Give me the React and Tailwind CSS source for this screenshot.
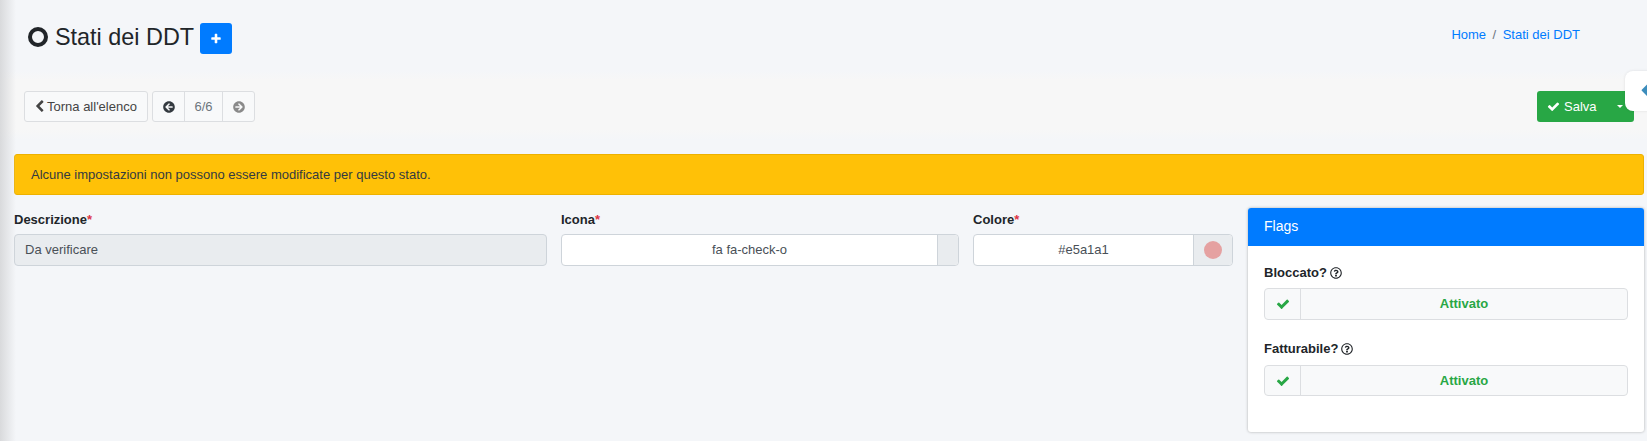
import { FaArrowCircleLeft, FaArrowCircleRight, FaRegQuestionCircle } from 'react-icons/fa';

function CheckIcon({ className }) {
  return (
    <svg viewBox="0 0 1792 1792" fill="currentColor" className={className}>
      <path d="M1671 566q0 40-28 68l-724 724-136 136q-28 28-68 28t-68-28l-136-136-362-362q-28-28-28-68t28-68l136-136q28-28 68-28t68 28l294 295 656-657q28-28 68-28t68 28l136 136q28 28 28 68z" />
    </svg>
  );
}

function ChevronIcon({ className }) {
  return (
    <svg viewBox="0 0 1792 1792" fill="currentColor" className={className}>
      <path d="M1427 301l-531 531 531 531q19 19 19 45t-19 45l-166 166q-19 19-45 19t-45-19l-742-742q-19-19-19-45t19-45l742-742q19-19 45-19t45 19l166 166q19 19 19 45t-19 45z" />
    </svg>
  );
}

function PlusIcon({ className }) {
  return (
    <svg viewBox="0 0 1792 1792" fill="currentColor" className={className}>
      <path d="M1600 736v192q0 40-28 68t-68 28h-416v416q0 40-28 68t-68 28h-192q-40 0-68-28t-28-68v-416h-416q-40 0-68-28t-28-68v-192q0-40 28-68t68-28h416v-416q0-40 28-68t68-28h192q40 0 68 28t28 68v416h416q40 0 68 28t28 68z" />
    </svg>
  );
}

function Field({ label, className, children }) {
  return (
    <div className={className}>
      <label className="block h-[23px] text-[13px] leading-[17px] font-bold text-[#212529]">
        {label}
        <span className="text-[#dc3545]">*</span>
      </label>
      {children}
    </div>
  );
}

function Flag({ label, className, labelClass, boxClass }) {
  return (
    <div className={className}>
      <div className={`flex items-start gap-[3px] text-[13px] leading-[18px] font-bold text-[#212529] ${labelClass}`}>
        {label}
        <FaRegQuestionCircle className="mt-[3px] text-[12px] font-normal" />
      </div>
      <div className={`flex rounded-[4px] border border-[#dcdee1] bg-[#f8f9fa] ${boxClass}`}>
        <div className="flex w-[36px] items-center justify-center border-r border-[#dcdee1]">
          <CheckIcon className="h-[14px] w-[14px] text-[#28a745]" />
        </div>
        <div className="flex flex-1 items-center justify-center text-[13px] font-bold text-[#28a745]">Attivato</div>
      </div>
    </div>
  );
}

export default function App() {
  return (
    <div className="relative h-[441px] overflow-hidden bg-[#f4f6f9] font-['Liberation_Sans',sans-serif] text-[13px] text-[#212529]">
      {/* sidebar shadow */}
      <div className="absolute top-0 bottom-0 left-0 z-10 w-[16px] bg-gradient-to-r from-[#d9dadc] to-transparent" />
      {/* control sidebar tab */}
      <div className="absolute top-[71px] left-[1625px] z-10 h-[40px] w-[30px] overflow-hidden rounded-l-[8px] bg-white shadow-[0_0_3px_rgba(0,0,0,0.1)]">
        <ChevronIcon className="absolute top-[10px] left-[12px] h-[20px] w-[20px] text-[#3c8dbc]" />
      </div>

      <div className="relative px-[14px] pr-[3px]">
        <div className="flex items-start justify-between pt-[23px] pl-[14px]">
          <div className="flex items-center">
            <span className="mb-[3px] h-[20px] w-[20px] rounded-full border-[4px] border-[#212529]" />
            <h1 className="mb-[2px] ml-[7px] text-[23.4px] leading-[29px] font-normal">Stati dei DDT</h1>
            <button className="ml-[6px] flex h-[31px] w-[32px] items-center justify-center rounded-[3px] bg-[#007bff] text-white">
              <PlusIcon className="h-[12px] w-[12px]" />
            </button>
          </div>
          <div className="mt-[2px] mr-[64px] flex text-[13px] leading-[20px] text-[#007bff]">
            <span>Home</span>
            <span className="px-[6.5px] text-[#6c757d]">/</span>
            <span>Stati dei DDT</span>
          </div>
        </div>

        <div className="mt-[16px] -mr-[3px] -ml-[14px] flex items-center justify-between bg-[linear-gradient(to_bottom,#f4f6f9,#f7f7f7_15%,#f7f7f7_85%,#f4f6f9)] pt-[21px] pr-[13px] pb-[18px] pl-[24px]">
          <div className="flex">
            <button className="flex h-[31px] w-[124px] items-center gap-[1px] rounded-[3px] border border-[#dcdee1] bg-[#f8f9fa] pl-[8px] text-[13px] text-[#444]">
              <ChevronIcon className="h-[13px] w-[13px]" />
              Torna all'elenco
            </button>
            <div className="ml-[4px] flex h-[31px] rounded-[3px] border border-[#dcdee1] bg-[#f8f9fa]">
              <div className="flex w-[32px] items-center justify-center border-r border-[#dcdee1] text-[#343a40]">
                <FaArrowCircleLeft className="text-[12px]" />
              </div>
              <div className="flex w-[38px] items-center justify-center border-r border-[#dcdee1] text-[#6c757d]">6/6</div>
              <div className="flex w-[31px] items-center justify-center text-[#8a8a8a]">
                <FaArrowCircleRight className="text-[12px]" />
              </div>
            </div>
          </div>
          <button className="flex h-[31px] w-[97px] items-center rounded-[3px] bg-[#28a745] pl-[10px] text-[13px] text-white">
            <CheckIcon className="h-[13px] w-[13px]" />
            <span className="ml-[4px]">Salva</span>
            <span className="ml-[20px] h-0 w-0 border-x-[3px] border-t-[3px] border-x-transparent border-t-white" />
          </button>
        </div>

        <div className="mt-[14px] h-[41px] rounded-[3px] border border-[#edb100] bg-[#ffc107] pl-[16px] text-[13px] leading-[39px] text-[#343a40]">
          Alcune impostazioni non possono essere modificate per questo stato.
        </div>

        <div className="mt-[13px] flex items-start">
          <Field label="Descrizione" className="mt-[3px] w-[533px]">
            <div className="h-[32px] rounded-[4px] border border-[#ced4da] bg-[#e9ecef] pl-[10px] text-[13px] leading-[30px] text-[#495057]">Da verificare</div>
          </Field>
          <Field label="Icona" className="mt-[3px] ml-[14px] w-[398px]">
            <div className="flex h-[32px] rounded-[4px] border border-[#ced4da] bg-white">
              <div className="flex-1 text-center text-[13px] leading-[30px] text-[#495057]">fa fa-check-o</div>
              <div className="w-[21px] rounded-r-[4px] border-l border-[#ced4da] bg-[#e9ecef]" />
            </div>
          </Field>
          <Field label="Colore" className="mt-[3px] ml-[14px] w-[260px]">
            <div className="flex h-[32px] rounded-[4px] border border-[#ced4da] bg-white">
              <div className="flex-1 text-center text-[13px] leading-[30px] text-[#495057]">#e5a1a1</div>
              <div className="flex w-[39px] items-center justify-center rounded-r-[4px] border-l border-[#ced4da] bg-[#e9ecef]">
                <span className="h-[18px] w-[18px] rounded-full bg-[#e5a1a1]" />
              </div>
            </div>
          </Field>

          <div className="ml-[15px] h-[224px] w-[396px] overflow-hidden rounded-[3px] bg-white shadow-[0_0_3px_rgba(0,0,0,0.3)]">
            <div className="h-[38px] bg-[#007bff] pl-[16px] text-[14px] leading-[37px] text-white">Flags</div>
            <div className="px-[16px] pt-[18px]">
              <Flag label="Bloccato?" labelClass="h-[24px]" boxClass="h-[32px]" />
              <Flag label="Fatturabile?" className="mt-[20px]" labelClass="h-[25px]" boxClass="h-[31px]" />
            </div>
          </div>
        </div>
      </div>
    </div>
  );
}
